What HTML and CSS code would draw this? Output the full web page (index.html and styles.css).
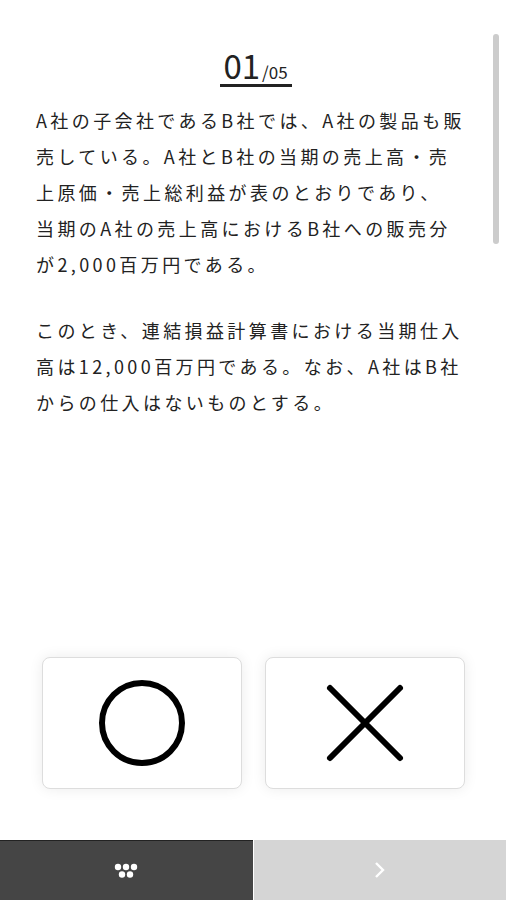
FILE: index.html
```html
<html>
<head>
    <meta charset="utf-8"/>
    <title>Quiz</title>
    <link rel="stylesheet" href="styles.css">
</head>

<body>
<div id="question">
    <div id="counter">
        <span class="num">01</span><span class="total">/05</span>
    </div>
    <p class="text">A社の子会社であるB社では、A社の製品も販<br>売している。A社とB社の当期の売上高・売<br>上原価・売上総利益が表のとおりであり、<br>当期のA社の売上高におけるB社への販売分<br>が2,000百万円である。</p>
    <p class="text">このとき、連結損益計算書における当期仕入<br>高は12,000百万円である。なお、A社はB社<br>からの仕入はないものとする。</p>
    <div id="scrollbar"></div>
</div>

<div id="answers">
    <div class="answer">
        <svg width="90" height="90" viewBox="0 0 90 90">
            <circle cx="45" cy="45" r="40" fill="none" stroke="#000" stroke-width="6"/>
        </svg>
    </div>
    <div class="answer">
        <svg width="90" height="90" viewBox="0 0 90 90">
            <path d="M10 10 L80 80 M80 10 L10 80" stroke="#000" stroke-width="6" stroke-linecap="round"/>
        </svg>
    </div>
</div>

<div id="bottom">
    <div class="tab dark">
        <svg width="26" height="18" viewBox="0 0 26 18">
            <circle cx="5" cy="5" r="3.2" fill="#fff"/>
            <circle cx="13" cy="5" r="3.2" fill="#fff"/>
            <circle cx="21" cy="5" r="3.2" fill="#fff"/>
            <circle cx="9" cy="12.5" r="3.2" fill="#fff"/>
            <circle cx="17" cy="12.5" r="3.2" fill="#fff"/>
        </svg>
    </div>
    <div class="tab light">
        <svg width="20" height="20" viewBox="0 0 20 20">
            <path d="M6 3 L13 10 L6 17" fill="none" stroke="#fff" stroke-width="2.4"/>
        </svg>
    </div>
</div>
</body>
</html>
```

FILE: styles.css
```css
body, html {
    margin: 0px;
    padding: 0px;
}

body {
    display: flex;
    flex-direction: column;
    width: 100%;
    height: 900px;
    background-color: #ffffff;
    font-family: 'Noto Sans CJK JP', 'Noto Sans', sans-serif;
    color: #222222;
}

#question {
    position: relative;
    flex: 1;
    padding: 46px 30px 0px 36px;
}

#counter {
    display: flex;
    align-items: baseline;
    width: max-content;
    margin: 0px auto;
    padding: 0px 4px 0px 3px;
    border-bottom: 3px solid #222222;
    height: 38px;
}

.num {
    font-size: 33px;
    line-height: 38px;
}

.total {
    font-size: 17px;
    line-height: 17px;
    margin-left: 2px;
}

.text {
    margin: 15px 0px 30px 0px;
    font-size: 18px;
    line-height: 36px;
    letter-spacing: 3.4px;
    white-space: nowrap;
}

.text + .text {
    margin-top: 0px;
}

#scrollbar {
    position: absolute;
    top: 34px;
    right: 7px;
    width: 6px;
    height: 210px;
    border-radius: 3px;
    background-color: #cccccc;
}

#answers {
    display: flex;
    justify-content: center;
    gap: 23px;
    padding: 0px 0px 51px 0px;
}

.answer {
    width: 200px;
    height: 132px;
    box-sizing: border-box;
    border: 1px solid #dddddd;
    border-radius: 8px;
    background-color: #ffffff;
    box-shadow: 0px 0px 14px rgba(0, 0, 0, 0.08);
    display: flex;
    justify-content: center;
    align-items: center;
}

#bottom {
    flex: 0 0 60px;
    display: flex;
    gap: 1px;
    background-color: #ffffff;
}

.tab {
    flex: 1;
    display: flex;
    justify-content: center;
    align-items: center;
}

.dark {
    background-color: #454545;
    border-top: 1px solid #222222;
}

.light {
    background-color: #d5d5d5;
}
```
